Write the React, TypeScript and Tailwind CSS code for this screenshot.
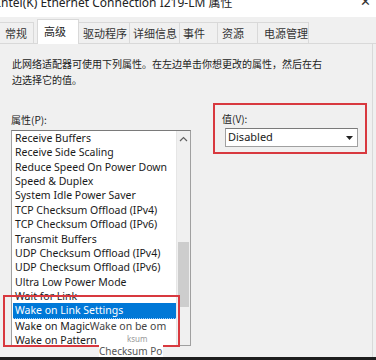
import React from 'react';

const tabs = [
  { label: '常规', w: 'w-[34px]', pl: 'pl-[5px]' },
  { label: '高级', w: 'w-[42px]', pl: 'pl-[6px]', active: true },
  { label: '驱动程序', w: 'w-[51px]', pl: 'pl-[4px]' },
  { label: '详细信息', w: 'w-[50px]', pl: 'pl-[3px]' },
  { label: '事件', w: 'w-[38px]', pl: 'pl-[3px]' },
  { label: '资源', w: 'w-[40px]', pl: 'pl-[4px]' },
  { label: '电源管理', w: 'w-[51px]', pl: 'pl-[6px]' },
];

const props = [
  'Receive Buffers',
  'Receive Side Scaling',
  'Reduce Speed On Power Down',
  'Speed & Duplex',
  'System Idle Power Saver',
  'TCP Checksum Offload (IPv4)',
  'TCP Checksum Offload (IPv6)',
  'Transmit Buffers',
  'UDP Checksum Offload (IPv4)',
  'UDP Checksum Offload (IPv6)',
  'Ultra Low Power Mode',
  'Wait for Link',
];

const cjk = "font-['Noto_Sans_CJK_SC',sans-serif]";
const latin = "font-['Noto_Sans','Noto_Sans_CJK_SC',sans-serif]";

export default function App() {
  return (
    <div className={`relative w-[376px] h-[360px] overflow-hidden bg-[#f0f0f0] flex flex-col ${latin}`}>
      {/* title bar */}
      <div className="h-[17px] bg-white flex justify-between shrink-0 overflow-hidden">
        <span className="-mt-[5px] -ml-[3px] text-[12px] leading-[16px] text-[#222] whitespace-nowrap">
          Intel(K) Ethernet Connection I219-LM 属性
        </span>
        <span className="-mt-[7px] mr-[5px] text-[13px] leading-[16px] text-[#333]">✕</span>
      </div>

      {/* tabs */}
      <div className="h-[27px] shrink-0 flex items-end border-b border-[#d9d9d9]">
        {tabs.map((t) =>
          t.active ? (
            <div
              key={t.label}
              className={`${t.w} ${t.pl} ml-[3px] h-[25px] -mb-px bg-white border border-b-0 border-[#d9d9d9] text-[11px] leading-[22px] text-[#222] whitespace-nowrap ${cjk}`}
            >
              {t.label}
            </div>
          ) : (
            <div
              key={t.label}
              className={`${t.w} ${t.pl} h-[21px] bg-[#f0f0f0] border border-b-0 border-l-0 border-[#d9d9d9] text-[11px] leading-[20px] text-[#333] whitespace-nowrap ${cjk}`}
            >
              {t.label}
            </div>
          )
        )}
      </div>

      {/* page */}
      <div className="flex-1 border-r border-[#d9d9d9] mr-[3px] relative">
        <div className={`pl-[12px] pt-[12px] w-[324px] text-[10px] leading-[16px] text-[#222] ${cjk}`}>
          此网络适配器可使用下列属性。在左边单击你想更改的属性，然后在右边选择它的值。
        </div>

        <div className="flex mt-[15px]">
          {/* left column */}
          <div className="ml-[11px] w-[180px] pt-[10px]">
            <div className={`text-[10px] leading-[14px] text-[#222] ${cjk}`}>属性(P):</div>
            <div className="mt-[3px] h-[216px] bg-white border border-[#a0a0a0] border-t-[#7a7a7a] flex">
              <div className="flex-1 pl-[1px] text-[10.5px] leading-[14.36px] text-[#1a1a1a] overflow-hidden whitespace-nowrap">
                {props.map((p) => (
                  <div key={p} className="pl-[2px]">{p}</div>
                ))}
                <div className="pl-[2px] bg-[#0078d7] text-white border-b border-dotted border-[#9fd0ff]">
                  Wake on Link Settings
                </div>
                <div className="pl-[2px]">
                  Wake on Magic <span className="-ml-[3px] text-[#444]">Wake on be om</span>
                </div>
                <div className="pl-[2px]">Wake on Pattern</div>
              </div>
              {/* scrollbar */}
              <div className="w-[14px] bg-[#f0f0f0] border-l border-[#e6e6e6] flex flex-col items-center">
                <svg width="9" height="6" viewBox="0 0 9 6" className="mt-[5px]">
                  <path d="M1 5 L4.5 1.5 L8 5" fill="none" stroke="#606060" strokeWidth="1.2" />
                </svg>
                <div className="mt-[100px] w-[11px] h-[65px] bg-[#cdcdcd]" />
              </div>
            </div>
          </div>

          {/* right column, annotated */}
          <div className="ml-[22px] w-[154px] h-[51px] border-[2.5px] border-[#d8393f] pl-[7px] pt-[7px]">
            <div className={`text-[10px] leading-[14px] text-[#222] ${cjk}`}>值(V):</div>
            <div className="mt-[2px] ml-[3px] w-[133px] h-[19px] bg-white border border-[#a0a0a0] border-t-[#7a7a7a] flex items-center justify-between">
              <span className="pl-[2px] text-[11px] text-[#1a1a1a]">Disabled</span>
              <svg width="7" height="4" viewBox="0 0 7 4" className="mr-[4px]">
                <path d="M0 0 H7 L3.5 4 Z" fill="#222" />
              </svg>
            </div>
          </div>
        </div>
      </div>

      {/* bottom edge */}
      <div className="h-[3px] bg-[#1e1e1e] shrink-0" />

      {/* annotation around the list rows */}
      <div className="absolute left-[3px] top-[295px] w-[177px] h-[52px] border-[2.5px] border-[#d8393f]" />

      {/* screenshot ghosting */}
      <div className="absolute left-[99px] top-[334px] w-[64px] h-[23px] bg-white text-[8px] leading-[9px] text-[#888] whitespace-nowrap">
        <div className="pl-[28px] text-[#999]">ksum</div>
        <div className="text-[10px] leading-[12px] text-[#555] mt-[2px]">Checksum Po</div>
      </div>
    </div>
  );
}
